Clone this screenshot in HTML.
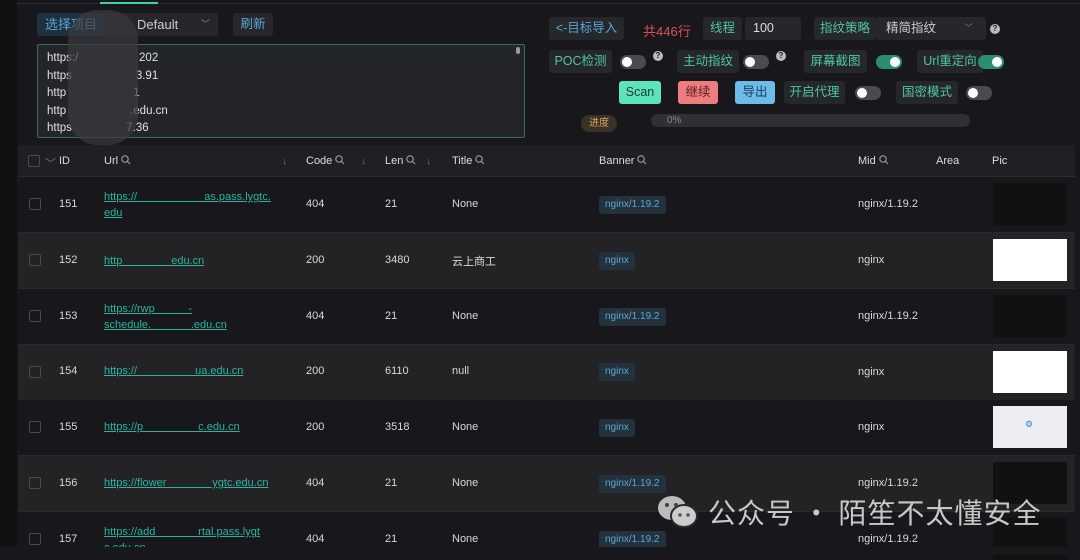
<!DOCTYPE html>
<html><head><meta charset="utf-8"><style>
*{box-sizing:border-box;margin:0;padding:0}
body{width:1080px;height:555px;background:#18181c;font-family:"Liberation Sans","Noto Sans CJK SC",sans-serif;color:#d8d8d8;position:relative;overflow:hidden;font-size:12px}
.a{position:absolute}
.btn{position:absolute;background:#26272b;border-radius:3px;height:23px;line-height:23px;text-align:center;font-size:12.5px;color:#4fc5a0;white-space:nowrap;overflow:hidden}
.tg{position:absolute;width:26px;height:14px;border-radius:7px;background:#4a4a4f}
.tg::after{content:"";position:absolute;left:2px;top:2px;width:10px;height:10px;border-radius:50%;background:#fff}
.tg.on{background:#2b8e70}.tg.on::after{left:14px}
.q{position:absolute;width:10px;height:10px;border-radius:50%;background:#bbb;color:#222;font-size:8px;line-height:10px;text-align:center;font-weight:bold}
.row{position:absolute;left:18px;width:1057px;height:56px;border-bottom:1px solid #2a2a2e}
.row div{position:absolute;font-size:11px}
.cb{left:11px;top:21px;width:12px;height:12px;border:1px solid #4a4a4e;border-radius:2px}
.u{color:#2bb3a0;text-decoration:underline;line-height:16px}
.tag{background:#24323d;color:#5fa6d0;border-radius:3px;padding:0 6px;height:18px;line-height:18px;font-size:10px!important}
.pic{left:975px;top:6px;width:74px;height:42px;background:#111}
.hd{position:absolute;top:155px;font-size:11px;color:#ddd}
.mg{display:inline-block;vertical-align:-1px;margin-left:3px}
</style></head><body>
<div class="a" style="left:0;top:0;width:17px;height:555px;background:#111114"></div>
<div class="a" style="left:17px;top:3px;width:1063px;height:1px;background:#2c2c30"></div>
<div class="a" style="left:100px;top:2px;width:58px;height:2px;background:#3fd3a5"></div>

<div class="a" style="left:37px;top:13px;width:68px;height:23px;background:#1f3040;color:#5aa7d6;font-size:13px;line-height:23px;padding-left:8px;border-radius:3px 0 0 3px">选择项目</div>
<div class="a" style="left:105px;top:13px;width:113px;height:23px;background:#26272b;color:#ccc;font-size:13px;line-height:23px;padding-left:32px">Default <span style="position:absolute;left:96px;color:#888;font-size:9px">﹀</span></div>
<div class="btn" style="left:233px;top:13px;width:40px;color:#5aa7d6">刷新</div>
<div class="a" style="left:37px;top:44px;width:488px;height:94px;border:1px solid #3d6b5c;background:#242528;border-radius:2px;padding:5px 9px;font-size:11.5px;line-height:17.5px;color:#e0e0e0">https:/&nbsp;&nbsp;&nbsp;&nbsp;&nbsp;&nbsp;&nbsp;&nbsp;&nbsp;&nbsp;&nbsp;&nbsp;&nbsp;&nbsp;&nbsp;&nbsp;&nbsp;&nbsp;&nbsp;202<br>https&nbsp;&nbsp;&nbsp;&nbsp;&nbsp;&nbsp;&nbsp;&nbsp;&nbsp;&nbsp;&nbsp;&nbsp;&nbsp;&nbsp;&nbsp;&nbsp;&nbsp;&nbsp;&nbsp;&nbsp;3.91<br>http&nbsp;&nbsp;&nbsp;&nbsp;&nbsp;&nbsp;&nbsp;&nbsp;&nbsp;&nbsp;&nbsp;&nbsp;&nbsp;&nbsp;&nbsp;&nbsp;&nbsp;&nbsp;&nbsp;&nbsp;&nbsp;1<br>http&nbsp;&nbsp;&nbsp;&nbsp;&nbsp;&nbsp;&nbsp;&nbsp;&nbsp;&nbsp;&nbsp;&nbsp;&nbsp;&nbsp;&nbsp;&nbsp;&nbsp;&nbsp;&nbsp;&nbsp;.edu.cn<br>https&nbsp;&nbsp;&nbsp;&nbsp;&nbsp;&nbsp;&nbsp;&nbsp;&nbsp;&nbsp;&nbsp;&nbsp;&nbsp;&nbsp;&nbsp;&nbsp;&nbsp;7.36
<div class="a" style="right:4px;top:2px;width:4px;height:7px;background:#999;border-radius:2px"></div></div>
<div class="a" style="left:68px;top:10px;width:70px;height:135px;background:#3a3b3f;border-radius:30px;opacity:.7"></div>

<div class="btn" style="left:549px;top:17px;width:75px;color:#5aa7d6">&lt;-目标导入</div>
<div class="a" style="left:643px;top:21px;color:#e04c60;font-size:13px">共446行</div>
<div class="btn" style="left:703px;top:17px;width:39px">线程</div>
<div class="btn" style="left:745px;top:17px;width:56px;color:#ddd;text-align:left;padding-left:8px">100</div>
<div class="btn" style="left:814px;top:17px;width:62px">指纹策略</div>
<div class="btn" style="left:876px;top:17px;width:110px;color:#ccc;text-align:left;padding-left:10px">精简指纹<span style="position:absolute;left:88px;color:#777;font-size:9px">﹀</span></div>
<div class="q" style="left:990px;top:24px">?</div>

<div class="btn" style="left:549px;top:50px;width:63px">POC检测</div>
<div class="tg" style="left:620px;top:55px"></div><div class="q" style="left:653px;top:51px">?</div>
<div class="btn" style="left:677px;top:50px;width:62px">主动指纹</div>
<div class="tg" style="left:743px;top:55px"></div><div class="q" style="left:776px;top:51px">?</div>
<div class="btn" style="left:804px;top:50px;width:63px">屏幕截图</div>
<div class="tg on" style="left:876px;top:55px"></div>
<div class="btn" style="left:917px;top:50px;width:66px">Url重定向</div>
<div class="tg on" style="left:978px;top:55px"></div>

<div class="btn" style="left:619px;top:81px;width:42px;background:#5de3bb;color:#1b3b33">Scan</div>
<div class="btn" style="left:678px;top:81px;width:40px;background:#ef7d80;color:#5a1f20">继续</div>
<div class="btn" style="left:735px;top:81px;width:40px;background:#6cbbe9;color:#1c3b55">导出</div>
<div class="btn" style="left:784px;top:81px;width:61px">开启代理</div>
<div class="tg" style="left:855px;top:86px"></div>
<div class="btn" style="left:896px;top:81px;width:62px">国密模式</div>
<div class="tg" style="left:966px;top:86px"></div>

<div class="a" style="left:581px;top:115px;width:36px;height:17px;border-radius:9px;background:#3a3226;color:#d9a658;font-size:10px;line-height:17px;text-align:center">进度</div>
<div class="a" style="left:651px;top:114px;width:319px;height:13px;border-radius:7px;background:#2f3034;color:#888;font-size:10px;line-height:13px;padding-left:16px">0%</div>

<div class="a" style="left:18px;top:145px;width:1057px;height:32px;background:#202024;border-bottom:1px solid #2c2c30"></div>
<div class="a" style="left:28px;top:155px;width:12px;height:12px;border:1px solid #4a4a4e;border-radius:2px"></div>
<div class="hd" style="left:45px;color:#777">﹀</div>
<div class="hd" style="left:59px">ID</div>
<div class="hd" style="left:104px">Url<svg class="mg" width="10" height="10"><circle cx="4" cy="4" r="3.2" fill="none" stroke="#999" stroke-width="1.2"/><path d="M6.5 6.5L9 9" stroke="#999" stroke-width="1.2"/></svg></div>
<div class="hd" style="left:282px;color:#666">↓</div>
<div class="hd" style="left:306px">Code<svg class="mg" width="10" height="10"><circle cx="4" cy="4" r="3.2" fill="none" stroke="#999" stroke-width="1.2"/><path d="M6.5 6.5L9 9" stroke="#999" stroke-width="1.2"/></svg></div>
<div class="hd" style="left:361px;color:#666">↓</div>
<div class="hd" style="left:385px">Len<svg class="mg" width="10" height="10"><circle cx="4" cy="4" r="3.2" fill="none" stroke="#999" stroke-width="1.2"/><path d="M6.5 6.5L9 9" stroke="#999" stroke-width="1.2"/></svg></div>
<div class="hd" style="left:426px;color:#666">↓</div>
<div class="hd" style="left:452px">Title<svg class="mg" width="10" height="10"><circle cx="4" cy="4" r="3.2" fill="none" stroke="#999" stroke-width="1.2"/><path d="M6.5 6.5L9 9" stroke="#999" stroke-width="1.2"/></svg></div>
<div class="hd" style="left:599px">Banner<svg class="mg" width="10" height="10"><circle cx="4" cy="4" r="3.2" fill="none" stroke="#999" stroke-width="1.2"/><path d="M6.5 6.5L9 9" stroke="#999" stroke-width="1.2"/></svg></div>
<div class="hd" style="left:858px">Mid<svg class="mg" width="10" height="10"><circle cx="4" cy="4" r="3.2" fill="none" stroke="#999" stroke-width="1.2"/><path d="M6.5 6.5L9 9" stroke="#999" stroke-width="1.2"/></svg></div>
<div class="hd" style="left:936px">Area</div>
<div class="hd" style="left:992px">Pic</div>

<div class="row" style="top:177px;background:#18181c"><div class="cb"></div><div style="left:41px;top:21px">151</div><div class="u" style="left:86px;top:12px">https://&nbsp;&nbsp;&nbsp;&nbsp;&nbsp;&nbsp;&nbsp;&nbsp;&nbsp;&nbsp;&nbsp;&nbsp;&nbsp;&nbsp;&nbsp;&nbsp;&nbsp;&nbsp;&nbsp;&nbsp;&nbsp;&nbsp;as.pass.lygtc.<br>edu</div><div style="left:288px;top:21px">404</div><div style="left:367px;top:21px">21</div><div style="left:434px;top:21px">None</div><div class="tag" style="left:581px;top:19px">nginx/1.19.2</div><div style="left:840px;top:21px">nginx/1.19.2</div><div class="pic"></div></div>
<div class="row" style="top:233px;background:#232326"><div class="cb"></div><div style="left:41px;top:21px">152</div><div class="u" style="left:86px;top:20px">http&nbsp;&nbsp;&nbsp;&nbsp;&nbsp;&nbsp;&nbsp;&nbsp;&nbsp;&nbsp;&nbsp;&nbsp;&nbsp;&nbsp;&nbsp;&nbsp;edu.cn</div><div style="left:288px;top:21px">200</div><div style="left:367px;top:21px">3480</div><div style="left:434px;top:20px">云上商工</div><div class="tag" style="left:581px;top:19px">nginx</div><div style="left:840px;top:21px">nginx</div><div class="pic" style="background:#fff"></div></div>
<div class="row" style="top:289px;background:#18181c"><div class="cb"></div><div style="left:41px;top:21px">153</div><div class="u" style="left:86px;top:12px">https://rwp&nbsp;&nbsp;&nbsp;&nbsp;&nbsp;&nbsp;&nbsp;&nbsp;&nbsp;&nbsp;&nbsp;-<br>schedule.&nbsp;&nbsp;&nbsp;&nbsp;&nbsp;&nbsp;&nbsp;&nbsp;&nbsp;&nbsp;&nbsp;&nbsp;&nbsp;.edu.cn</div><div style="left:288px;top:21px">404</div><div style="left:367px;top:21px">21</div><div style="left:434px;top:21px">None</div><div class="tag" style="left:581px;top:19px">nginx/1.19.2</div><div style="left:840px;top:21px">nginx/1.19.2</div><div class="pic"></div></div>
<div class="row" style="top:345px;background:#232326"><div class="cb"></div><div style="left:41px;top:20px">154</div><div class="u" style="left:86px;top:18px">https://&nbsp;&nbsp;&nbsp;&nbsp;&nbsp;&nbsp;&nbsp;&nbsp;&nbsp;&nbsp;&nbsp;&nbsp;&nbsp;&nbsp;&nbsp;&nbsp;&nbsp;&nbsp;&nbsp;ua.edu.cn</div><div style="left:288px;top:20px">200</div><div style="left:367px;top:20px">6110</div><div style="left:434px;top:20px">null</div><div class="tag" style="left:581px;top:18px">nginx</div><div style="left:840px;top:21px">nginx</div><div class="pic" style="background:#fff"></div></div>
<div class="row" style="top:400px;background:#18181c"><div class="cb"></div><div style="left:41px;top:21px">155</div><div class="u" style="left:86px;top:19px">https://p&nbsp;&nbsp;&nbsp;&nbsp;&nbsp;&nbsp;&nbsp;&nbsp;&nbsp;&nbsp;&nbsp;&nbsp;&nbsp;&nbsp;&nbsp;&nbsp;&nbsp;&nbsp;c.edu.cn</div><div style="left:288px;top:21px">200</div><div style="left:367px;top:21px">3518</div><div style="left:434px;top:21px">None</div><div class="tag" style="left:581px;top:19px">nginx</div><div style="left:840px;top:21px">nginx</div><div class="pic" style="background:#eceef2"><span style="position:absolute;left:32px;top:13px;color:#3b82d6;font-size:9px">⚙</span></div></div>
<div class="row" style="top:456px;background:#232326"><div class="cb"></div><div style="left:41px;top:21px">156</div><div class="u" style="left:86px;top:19px">https://flower&nbsp;&nbsp;&nbsp;&nbsp;&nbsp;&nbsp;&nbsp;&nbsp;&nbsp;&nbsp;&nbsp;&nbsp;&nbsp;&nbsp;&nbsp;ygtc.edu.cn</div><div style="left:288px;top:21px">404</div><div style="left:367px;top:21px">21</div><div style="left:434px;top:21px">None</div><div class="tag" style="left:581px;top:19px">nginx/1.19.2</div><div style="left:840px;top:21px">nginx/1.19.2</div><div class="pic"></div></div>
<div class="row" style="top:512px;background:#18181c;height:43px"><div class="cb" style="top:21px"></div><div style="left:41px;top:21px">157</div><div class="u" style="left:86px;top:12px">https://add&nbsp;&nbsp;&nbsp;&nbsp;&nbsp;&nbsp;&nbsp;&nbsp;&nbsp;&nbsp;&nbsp;&nbsp;&nbsp;&nbsp;rtal.pass.lygt<br>c.edu.cn</div><div style="left:288px;top:21px">404</div><div style="left:367px;top:21px">21</div><div style="left:434px;top:21px">None</div><div class="tag" style="left:581px;top:19px">nginx/1.19.2</div><div style="left:840px;top:21px">nginx/1.19.2</div><div class="pic"></div></div>
<div class="a" style="left:0;top:547px;width:1080px;height:8px;background:#18181c"></div>

<svg class="a" style="left:656px;top:494px" width="44" height="36" viewBox="0 0 44 36"><ellipse cx="16" cy="14" rx="14" ry="12" fill="#bbb"/><ellipse cx="28" cy="22" rx="13" ry="11" fill="#ccc" stroke="#2a2a2e" stroke-width="2"/><circle cx="11" cy="11" r="2" fill="#444"/><circle cx="20" cy="11" r="2" fill="#444"/><circle cx="24" cy="21" r="1.8" fill="#555"/><circle cx="32" cy="21" r="1.8" fill="#555"/></svg>
<div class="a" style="left:708px;top:494px;font-size:28px;color:#c8c8c8;letter-spacing:1px;font-family:'Noto Sans CJK SC',sans-serif;line-height:36px">公众号 · 陌笙不太懂安全</div>
</body></html>
